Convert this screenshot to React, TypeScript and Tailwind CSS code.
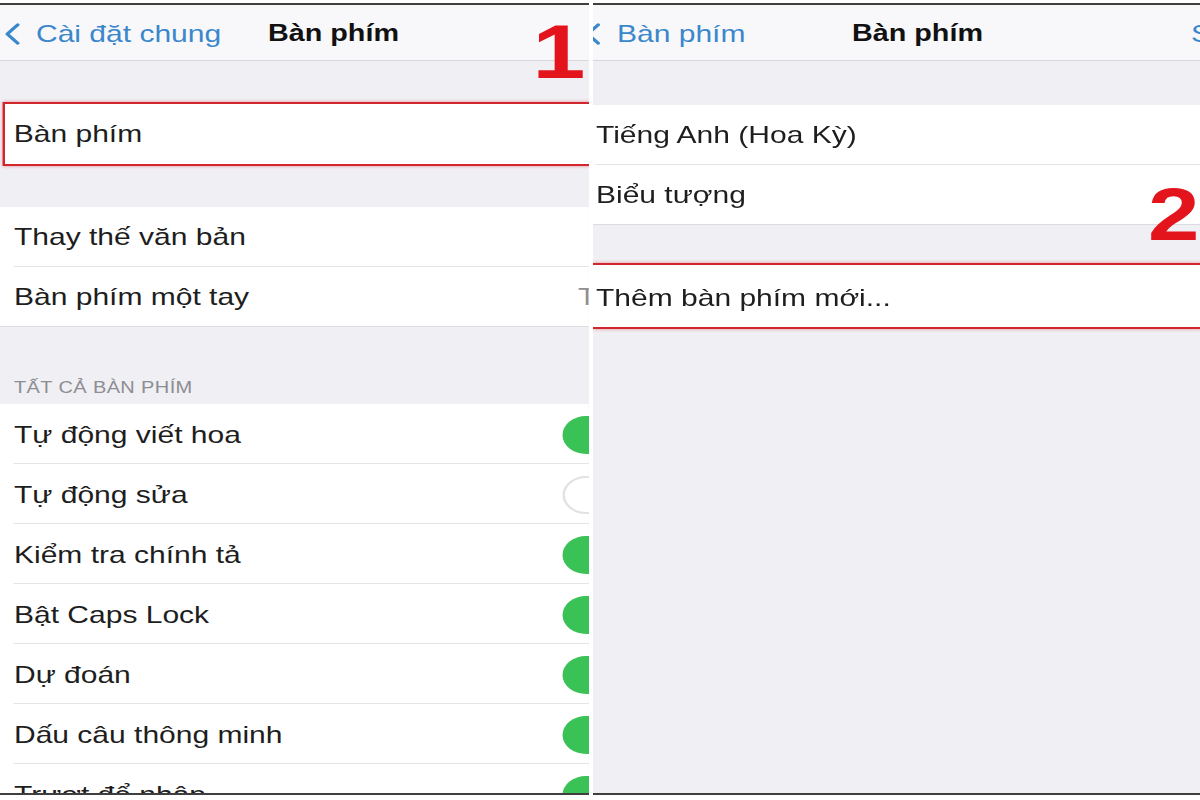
import React from "react";

function Chevron({ className = "" }: { className?: string }) {
  return (
    <svg
      className={className}
      width="12"
      height="22"
      viewBox="0 0 12 22"
      fill="none"
      stroke="#3b87cb"
      strokeWidth="2.8"
      strokeLinecap="round"
      strokeLinejoin="round"
    >
      <path d="M10.2 1.8 L1.8 11 L10.2 20.2" />
    </svg>
  );
}

function ToggleOn() {
  return <div className="w-[60px] h-[38px] rounded-full bg-[#3bc257] shrink-0 -mr-[38.4px]" />;
}

function ToggleOff() {
  return <div className="w-[60px] h-[38px] rounded-full bg-white border-2 border-[#e2e2e5] shrink-0 -mr-[38.4px]" />;
}

function Row({
  label,
  trailing,
  last = false,
  pl = "pl-[11.2px]",
  pt = "",
}: {
  label: string;
  trailing?: React.ReactNode;
  last?: boolean;
  pl?: string;
  pt?: string;
}) {
  return (
    <div className="bg-white shrink-0">
      <div className={`h-[59px] flex items-center ${pl} ${pt}`}>
        <span className="flex-1 text-[24px] leading-[28px] text-[#1e1e1e] whitespace-nowrap">{label}</span>
        {trailing}
      </div>
      {last ? (
        <div className="h-px bg-[#dcdce0]" />
      ) : (
        <div className={`h-px bg-[#e4e4e8] ${pl === "pl-[11.2px]" ? "ml-[11.2px]" : "ml-[2.4px]"}`} />
      )}
    </div>
  );
}

function LeftPanel() {
  return (
    <div className="w-[589px] h-[792px] border-y-2 border-[#3f3f3f] overflow-hidden bg-[#efeff4] shrink-0">
      <div className="relative w-[471.2px] h-full origin-left scale-x-[1.25] flex flex-col">
        {/* Nav bar */}
        <div className="h-[56px] shrink-0 bg-[#f8f8fa] border-b border-[#d8d8dc] flex items-center pt-[2px]">
          <div className="w-[214.4px] flex items-center shrink-0">
            <Chevron className="ml-[4px] shrink-0" />
            <span className="ml-[12.8px] text-[24px] text-[#3b87cb] whitespace-nowrap">Cài đặt chung</span>
          </div>
          <span className="text-[23px] font-bold text-[#111] whitespace-nowrap">Bàn phím</span>
        </div>

        <div className="h-[41px] shrink-0" />

        {/* highlighted row */}
        <div className="h-[64px] shrink-0 ml-[2.4px] -mr-[20px] bg-white border-2 border-[#d1262c] shadow-[0_0_3px_rgba(214,30,36,0.45)] flex items-center pl-[6.6px]">
          <span className="text-[24px] text-[#1e1e1e] whitespace-nowrap">Bàn phím</span>
        </div>

        <div className="h-[41px] shrink-0" />

        <Row label="Thay thế văn bản" />
        <Row
          label="Bàn phím một tay"
          last
          pt="pt-[1px]"
          trailing={
            <div className="w-[8.8px] overflow-hidden shrink-0">
              <span className="block text-[24px] text-[#8e8e93] whitespace-nowrap">Tắt</span>
            </div>
          }
        />

        <div className="h-[77px] shrink-0 flex items-end pb-[6px] pl-[11.2px]">
          <span className="text-[16px] leading-[20px] text-[#8d8d92] tracking-[0.3px] whitespace-nowrap">TẤT CẢ BÀN PHÍM</span>
        </div>

        <Row label="Tự động viết hoa" pt="pt-[3px]" trailing={<ToggleOn />} />
        <Row label="Tự động sửa" pt="pt-[3px]" trailing={<ToggleOff />} />
        <Row label="Kiểm tra chính tả" pt="pt-[3px]" trailing={<ToggleOn />} />
        <Row label="Bật Caps Lock" pt="pt-[3px]" trailing={<ToggleOn />} />
        <Row label="Dự đoán" pt="pt-[3px]" trailing={<ToggleOn />} />
        <Row label="Dấu câu thông minh" pt="pt-[3px]" trailing={<ToggleOn />} />
        <Row label="Trượt để nhập" pt="pt-[3px]" trailing={<ToggleOn />} />

        <div className="absolute left-[426px] top-[9px] text-[76px] leading-none font-bold text-[#e3141c]">1</div>
      </div>
    </div>
  );
}

function RightPanel() {
  return (
    <div className="w-[607px] h-[792px] border-y-2 border-[#3f3f3f] overflow-hidden bg-[#efeff4] shrink-0">
      <div className="relative w-[485.6px] h-full origin-left scale-x-[1.25] flex flex-col">
        {/* Nav bar */}
        <div className="h-[56px] shrink-0 bg-[#f8f8fa] border-b border-[#d8d8dc] flex items-center pt-[2px]">
          <div className="w-[207.2px] flex items-center shrink-0">
            <Chevron className="-ml-[6.4px] shrink-0" />
            <span className="ml-[13.6px] text-[24px] text-[#3b87cb] whitespace-nowrap">Bàn phím</span>
          </div>
          <span className="text-[23px] font-bold text-[#111] whitespace-nowrap">Bàn phím</span>
          <div className="ml-auto w-[7.2px] overflow-hidden shrink-0">
            <span className="block text-[24px] text-[#3b87cb] whitespace-nowrap">Sửa</span>
          </div>
        </div>

        <div className="h-[44px] shrink-0" />

        <Row label="Tiếng Anh (Hoa Kỳ)" pl="pl-[2.4px]" pt="pt-[1px]" />
        <Row label="Biểu tượng" pl="pl-[2.4px]" pt="pt-[1px]" last />

        <div className="h-[38px] shrink-0" />

        <div className="h-[66px] shrink-0 bg-white border-y-2 border-[#d1262c] shadow-[0_0_3px_rgba(214,30,36,0.45)] flex items-center pl-[2.4px] pt-[3px]">
          <span className="text-[24px] text-[#1e1e1e] whitespace-nowrap">Thêm bàn phím mới...</span>
        </div>

        <div className="absolute left-[444px] top-[173px] text-[74px] leading-none font-bold text-[#e3141c]">2</div>
      </div>
    </div>
  );
}

export default function App() {
  return (
    <div className="w-[1200px] h-[800px] bg-white flex gap-[4px] pt-[3px] overflow-hidden font-['Liberation_Sans',Arial,sans-serif]">
      <LeftPanel />
      <RightPanel />
    </div>
  );
}
